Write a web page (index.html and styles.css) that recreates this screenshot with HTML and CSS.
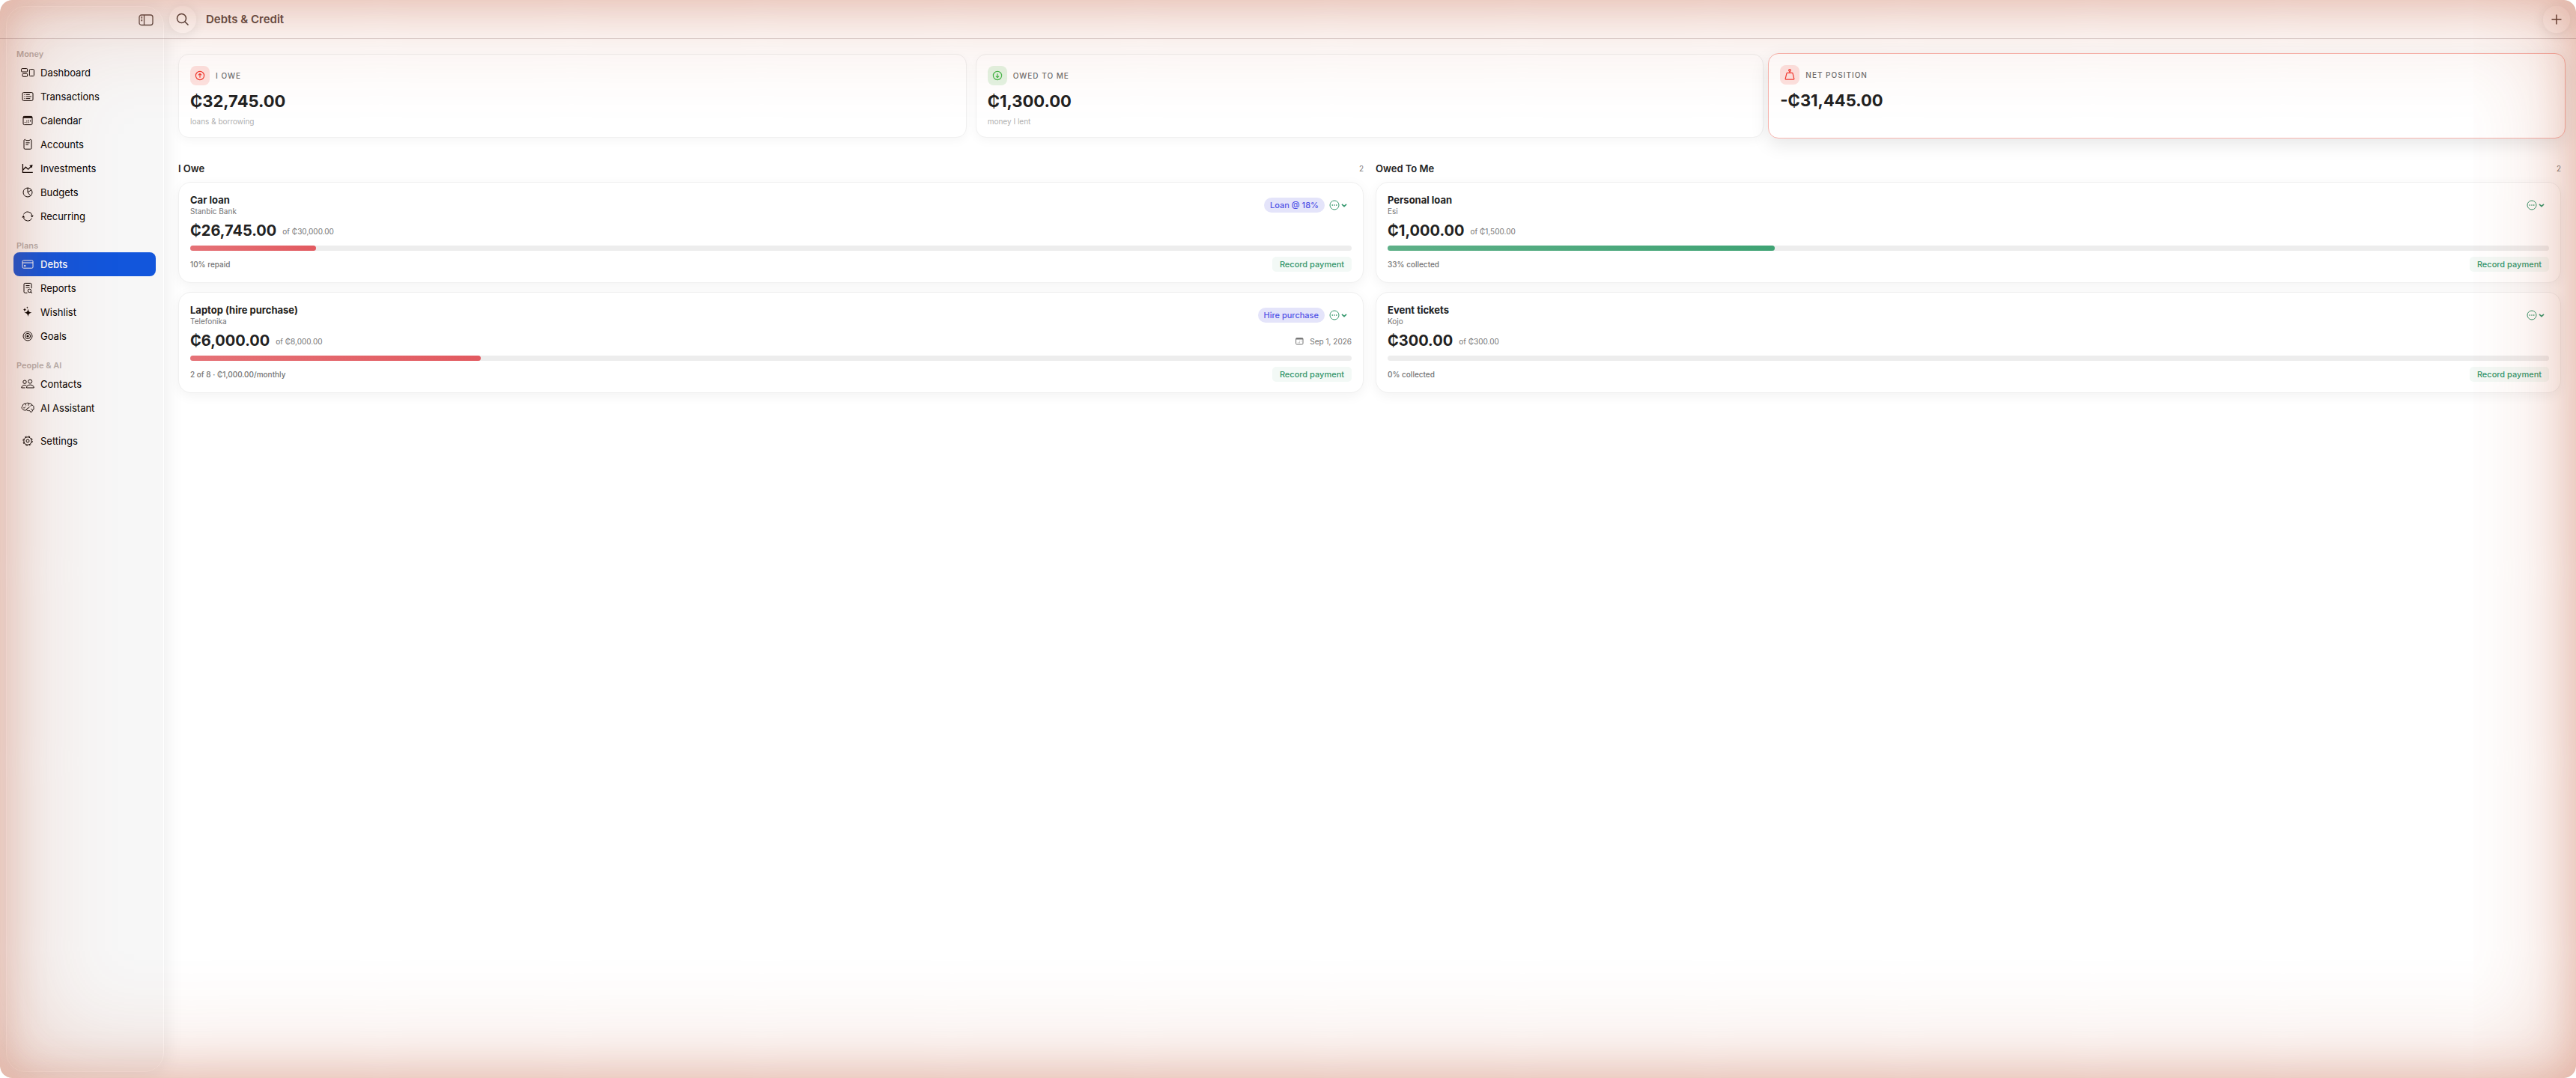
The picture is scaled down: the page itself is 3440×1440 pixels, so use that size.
FILE: index.html
```html
<!DOCTYPE html>
<html lang="en">
<head>
  <meta charset="UTF-8">
  <meta name="viewport" content="width=device-width, initial-scale=1.0">
  <title>Debts &amp; Credit</title>
  <link rel="stylesheet" href="styles.css">
</head>
<body>
  <div class="window">
    <aside class="sidebar">
      <div class="sidebar-top">
        <button class="icon-button" aria-label="Toggle sidebar">
          <svg width="20" height="16" viewBox="0 0 20 16"><rect x="1" y="1" width="18" height="13.5" rx="3"/><path d="M7.5 1v13.5M3.2 4h2M3.2 6.3h2M3.2 8.6h2"/></svg>
        </button>
      </div>
      <nav>
        <h2>Money</h2>
        <a href="#"><svg viewBox="0 0 18 16"><rect x=".6" y="2.6" width="8" height="4.4" rx="1"/><rect x="2" y="9.3" width="6.6" height="4" rx="1"/><rect x="11.4" y="3.6" width="6" height="9" rx="1"/></svg>Dashboard</a>
        <a href="#"><svg viewBox="0 0 18 16"><rect x="2" y="2.6" width="14" height="10.8" rx="1.5"/><path d="M4.4 5.4h1M6.8 5.4h5M4.4 8h1M6.8 8h7M4.4 10.6h1M6.8 10.6h5.5"/></svg>Transactions</a>
        <a href="#"><svg viewBox="0 0 18 16"><rect x="3" y="2.4" width="12" height="11.2" rx="1.5"/><path d="M3 3.6h12" stroke-width="2.4"/><path d="M5.4 10v1.4M7.8 8v3.4M10.2 7v4.4M12.6 7v3" stroke-dasharray="1 .6"/></svg>Calendar</a>
        <a href="#"><svg viewBox="0 0 18 16"><path d="M4 2.2l1.4-.9L7 2.7h4l1.6-1.4 1.4.9v10.6a1.4 1.4 0 0 1-1.4 1.4H5.4A1.4 1.4 0 0 1 4 12.8z"/><path d="M6.4 5.8h5.2M6.4 8.2h3.6"/></svg>Accounts</a>
        <a href="#"><svg viewBox="0 0 18 16"><path d="M2.4 2v11.4h13.4M2.4 10.2l4-4 3.2 3 4-4" stroke-width="1.3"/><path class="solid" d="M11.2 4l4.4-1-1 4.4z"/></svg>Investments</a>
        <a href="#"><svg viewBox="0 0 18 16"><circle cx="9" cy="8" r="6"/><path d="M9 2v6l3.8 4.6M9 8l5-3.4"/></svg>Budgets</a>
        <a href="#"><svg viewBox="0 0 18 16"><path d="M3.6 5.4a6 6 0 0 1 11.200 1M14.400 10.600a6 6 0 0 1-11.200-1"/><path class="solid" d="M1.200 9.400h4L3.200 6.600zM12.800 6.800h4l-2 2.800z"/></svg>Recurring</a>

        <h2>Plans</h2>
        <a href="#" class="active" aria-current="page"><svg viewBox="0 0 18 16"><rect x="2" y="2.8" width="14" height="10.4" rx="1.4"/><path d="M2 6h14M4.4 9.600h1.600v1H4.400z"/></svg>Debts</a>
        <a href="#"><svg viewBox="0 0 18 16"><path d="M8.500 14.200H5.400A1.400 1.400 0 0 1 4 12.800V2.800a1.400 1.400 0 0 1 1.400-1.400h7.200A1.400 1.400 0 0 1 14 2.800v5.400M6.500 4.500h5M6.500 7h5"/><circle cx="11.400" cy="11.400" r="2.200"/><path d="M13 13l2 1.600"/></svg>Reports</a>
        <a href="#"><svg viewBox="0 0 18 16"><path class="solid" d="M9.500 3.600c.7 3.500 1.400 4.500 5.100 5.200-3.700.7-4.400 1.700-5.100 5.300-.7-3.600-1.400-4.600-5.100-5.300 3.700-.7 4.400-1.700 5.100-5.200zM5 2.200c.4 1.700.8 2.200 2.300 2.500C5.800 5 5.400 5.500 5 7.200 4.600 5.500 4.200 5 2.700 4.700 4.200 4.400 4.600 3.900 5 2.200zM8.400.2c.2 1.100.5 1.400 1.500 1.600-1 .2-1.300.5-1.500 1.600-.2-1.100-.5-1.400-1.500-1.600 1-.2 1.300-.5 1.500-1.600z"/></svg>Wishlist</a>
        <a href="#"><svg viewBox="0 0 18 16"><circle cx="9" cy="8" r="6"/><circle cx="9" cy="8" r="3.600"/><circle class="solid" cx="9" cy="8" r="1.600"/></svg>Goals</a>

        <h2>People &amp; AI</h2>
        <a href="#"><svg viewBox="0 0 18 16"><circle cx="5" cy="5.200" r="2.200"/><circle cx="12.200" cy="4.600" r="2.500"/><path d="M7.400 10.100C4.600 8.500 1 9.800.7 13h5M7.400 13c0-5.200 9.800-5.200 9.900 0z"/></svg>Contacts</a>
        <a href="#"><svg viewBox="0 0 18 16"><path d="M2.200 9.500C.6 8.600.8 6 2.300 5.300 2.200 3 4.500 1.800 6.300 2.300 7.600.9 10 1.100 11 2.200c1.700-.3 3.300.4 3.800 1.800 1.700.5 2.600 2.100 2.200 3.700.4 1.500-.2 3-1.600 3.400-.1 1.300-1 2.400-2.300 2.600l-1.500-2.200c-1.500.3-3 .1-3.900-.9-1.700.7-4.700.5-5.500-1.100zM3.200 7.800c1.300.5 2.300-.2 2.600-1.300M6.300 2.300c-.4 1 0 1.900.8 2.300M7.700 10.600c-.2-1.500.7-2.500 2-2.600M11 2.200c-1.200.6-1.500 1.600-1.100 2.600M9.700 8c1 0 1.500-.8 1.500-1.700M14.800 4c-1.200.1-1.900.8-2 1.800M15.400 11.100c-.2-1-.9-1.700-1.900-1.800"/></svg>AI Assistant</a>
        <a href="#" class="settings"><svg viewBox="0 0 18 16"><circle cx="9" cy="8" r="5.200"/><circle cx="9" cy="8" r="6.200" stroke-dasharray="2.500 2.370"/><circle cx="9" cy="8" r="2"/></svg>Settings</a>
      </nav>
    </aside>

    <main class="main">
      <header class="topbar">
        <button class="round-button" aria-label="Search">
          <svg width="18" height="18" viewBox="0 0 18 18"><circle cx="7.500" cy="7.500" r="6"/><path d="M12 12l4.500 4.500"/></svg>
        </button>
        <h1>Debts &amp; Credit</h1>
        <button class="round-button add" aria-label="Add debt">
          <svg width="14" height="14" viewBox="0 0 14 14"><path d="M7 .5v13M.5 7h13"/></svg>
        </button>
      </header>

      <section class="stats">
        <div class="stat">
          <div class="stat-head">
            <span class="badge red"><svg width="14" height="14" viewBox="0 0 14 14"><circle cx="7" cy="7" r="5.600"/><path d="M7 9.800V4.600M4.900 6.400L7 4.300l2.100 2.100"/></svg></span>
            <h3>I OWE</h3>
          </div>
          <p class="value">₵32,745.00</p>
          <p class="hint">loans &amp; borrowing</p>
        </div>
        <div class="stat">
          <div class="stat-head">
            <span class="badge green"><svg width="14" height="14" viewBox="0 0 14 14"><circle cx="7" cy="7" r="5.600"/><path d="M7 4.200v5.200M4.900 7.600L7 9.700l2.100-2.100"/></svg></span>
            <h3>OWED TO ME</h3>
          </div>
          <p class="value">₵1,300.00</p>
          <p class="hint">money I lent</p>
        </div>
        <div class="stat highlight">
          <div class="stat-head">
            <span class="badge red"><svg width="14" height="16" viewBox="0 0 14 16"><circle cx="7" cy="2" r="1.300"/><path d="M7 3.300v2M3.800 5.400h6.400q.7 0 .9.700l1.700 7q.2 1-.8 1H2q-1 0-.8-1l1.700-7q.2-.7.900-.7z"/></svg></span>
            <h3>NET POSITION</h3>
          </div>
          <p class="value">-₵31,445.00</p>
        </div>
      </section>

      <div class="columns">
        <section class="column">
          <div class="column-head"><h2>I Owe</h2><span>2</span></div>

          <article class="debt">
            <div class="debt-head">
              <div>
                <h3>Car loan</h3>
                <p>Stanbic Bank</p>
              </div>
              <span class="pill">Loan @ 18%</span>
              <button class="more" aria-label="More actions"><svg width="26" height="14" viewBox="0 0 26 14"><circle cx="7" cy="7" r="6"/><path d="M3.600 7h1.400M6.300 7h1.400M9 7h1.400" stroke-width="1.400"/><path d="M17 5.800l3 2.800 3-2.800" stroke-width="1.600"/></svg></button>
            </div>
            <div class="amount"><strong>₵26,745.00</strong><span>of ₵30,000.00</span></div>
            <div class="bar"><div class="fill owe" style="width: 10.85%"></div></div>
            <div class="debt-foot"><span>10% repaid</span><button class="record">Record payment</button></div>
          </article>

          <article class="debt">
            <div class="debt-head">
              <div>
                <h3>Laptop (hire purchase)</h3>
                <p>Telefonika</p>
              </div>
              <span class="pill">Hire purchase</span>
              <button class="more" aria-label="More actions"><svg width="26" height="14" viewBox="0 0 26 14"><circle cx="7" cy="7" r="6"/><path d="M3.600 7h1.400M6.300 7h1.400M9 7h1.400" stroke-width="1.400"/><path d="M17 5.800l3 2.800 3-2.800" stroke-width="1.600"/></svg></button>
            </div>
            <div class="amount"><strong>₵6,000.00</strong><span>of ₵8,000.00</span>
              <time datetime="2026-09-01"><svg width="11" height="10" viewBox="0 0 11 10"><rect x=".6" y=".6" width="9.400" height="8.400" rx="1.200"/><path d="M.6 1.600h9.400" stroke-width="1.800"/><path d="M3 6.800h1M5 6.800h1M5 4.800h1M7 4.800h1" opacity=".6"/></svg>Sep 1, 2026</time>
            </div>
            <div class="bar"><div class="fill owe" style="width: 25%"></div></div>
            <div class="debt-foot"><span>2 of 8 · ₵1,000.00/monthly</span><button class="record">Record payment</button></div>
          </article>
        </section>

        <section class="column">
          <div class="column-head"><h2>Owed To Me</h2><span>2</span></div>

          <article class="debt">
            <div class="debt-head">
              <div>
                <h3>Personal loan</h3>
                <p>Esi</p>
              </div>
              <button class="more" aria-label="More actions"><svg width="26" height="14" viewBox="0 0 26 14"><circle cx="7" cy="7" r="6"/><path d="M3.600 7h1.400M6.300 7h1.400M9 7h1.400" stroke-width="1.400"/><path d="M17 5.800l3 2.800 3-2.800" stroke-width="1.600"/></svg></button>
            </div>
            <div class="amount"><strong>₵1,000.00</strong><span>of ₵1,500.00</span></div>
            <div class="bar"><div class="fill owed" style="width: 33.33%"></div></div>
            <div class="debt-foot"><span>33% collected</span><button class="record">Record payment</button></div>
          </article>

          <article class="debt">
            <div class="debt-head">
              <div>
                <h3>Event tickets</h3>
                <p>Kojo</p>
              </div>
              <button class="more" aria-label="More actions"><svg width="26" height="14" viewBox="0 0 26 14"><circle cx="7" cy="7" r="6"/><path d="M3.600 7h1.400M6.300 7h1.400M9 7h1.400" stroke-width="1.400"/><path d="M17 5.800l3 2.800 3-2.800" stroke-width="1.600"/></svg></button>
            </div>
            <div class="amount"><strong>₵300.00</strong><span>of ₵300.00</span></div>
            <div class="bar"><div class="fill owed" style="width: 0%"></div></div>
            <div class="debt-foot"><span>0% collected</span><button class="record">Record payment</button></div>
          </article>
        </section>
      </div>
    </main>
    <div class="glow"></div>
  </div>
</body>
</html>
```
FILE: styles.css
```css
* {
  box-sizing: border-box;
}
body {
  margin: 0;
  background: #fff;
  font-family: Inter, "Noto Sans", sans-serif;
  font-size: 13px;
  color: #222;
}
h1, h2, h3, p {
  margin: 0;
}
button {
  font: inherit;
  border: none;
  background: none;
  padding: 0;
  cursor: pointer;
}
svg {
  display: block;
  fill: none;
  stroke: currentColor;
  stroke-width: 1;
}
svg .solid {
  fill: currentColor;
  stroke: none;
}

.window {
  position: relative;
  display: flex;
  min-height: 100vh;
  border-radius: 16px;
  overflow: hidden;
}
/* coloured light round the window edge, lies over everything */
.glow {
  position: absolute;
  inset: 0;
  border-radius: 16px;
  pointer-events: none;
  box-shadow:
    inset 0 0 60px rgba(184, 66, 28, 0.28),
    inset 0 0 150px rgba(184, 66, 28, 0.3);
}
/* hairline under the toolbar, runs across the sidebar too */
.window::after {
  content: "";
  position: absolute;
  top: 51px;
  left: 0;
  right: 0;
  height: 1px;
  background: rgba(70, 30, 30, 0.18);
}

/* sidebar */
.sidebar {
  width: 211px;
  flex-shrink: 0;
  margin: 8px 0 8px 8px;
  padding: 0 10px;
  background: #f7f7f7;
  border: 1px solid #fff;
  border-radius: 26px;
  box-shadow: 0 0 28px rgba(0, 0, 0, 0.09);
}
.sidebar-top {
  display: flex;
  justify-content: flex-end;
  padding: 10px 3px 0 0;
  height: 41px;
}
.icon-button {
  height: 16px;
  color: #574a46;
}
.icon-button svg {
  stroke-width: 1.3;
}
.sidebar h2 {
  margin: 15px 0 1px;
  padding-left: 3px;
  font-size: 11px;
  line-height: 16px;
  font-weight: 600;
  color: #b5b0ae;
}
.sidebar nav h2:first-child {
  margin-top: 14px;
}
.sidebar a {
  display: flex;
  align-items: center;
  gap: 8px;
  height: 32px;
  margin-left: -1px;
  padding-left: 10px;
  border-radius: 8px;
  color: #000;
  text-decoration: none;
}
.sidebar a svg {
  width: 18px;
  height: 16px;
}
.sidebar a.active {
  background: #1256dc;
  color: #fff;
  font-weight: 500;
}
.sidebar a.settings {
  margin-top: 12px;
}

/* toolbar */
.main {
  flex: 1;
  padding: 0 20px 20px 19px;
}
.topbar {
  display: flex;
  align-items: center;
  height: 51px;
  margin: 0 -12px;
}
.round-button {
  display: flex;
  align-items: center;
  justify-content: center;
  width: 36px;
  height: 36px;
  border: 1px solid rgba(255, 255, 255, 0.8);
  border-radius: 50%;
  background: rgba(255, 255, 255, 0.15);
  box-shadow: 0 2px 16px rgba(0, 0, 0, 0.1);
  color: #4a3d39;
}
.round-button svg {
  stroke-width: 1.5;
}
.topbar h1 {
  margin-left: 13px;
  font-size: 15px;
  font-weight: 600;
  color: #5a4e4a;
}
.topbar .add {
  margin-left: auto;
}

/* totals */
.stats {
  display: grid;
  grid-template-columns: repeat(3, 1fr);
  gap: 12px;
  margin-top: 21px;
}
.stat {
  height: 112px;
  padding: 15px;
  background: #fff;
  border: 1px solid #f0f0f0;
  border-radius: 14px;
  box-shadow: 0 4px 14px rgba(0, 0, 0, 0.04);
}
.stat.highlight {
  height: 114px;
  margin: -1px -6px;
  border-color: #f8b4ae;
  box-shadow: 0 8px 24px rgba(0, 0, 0, 0.1);
}
.stat-head {
  display: flex;
  align-items: center;
  gap: 8px;
}
.stat-head h3 {
  font-size: 10px;
  font-weight: 500;
  letter-spacing: 1px;
  color: #6f6f6f;
}
.badge {
  display: flex;
  align-items: center;
  justify-content: center;
  width: 26px;
  height: 26px;
  border-radius: 8px;
}
.badge svg {
  stroke-width: 1.2;
}
.badge.red {
  background: #fde2e0;
  color: #f23b32;
}
.badge.green {
  background: #e3f3e2;
  color: #45b649;
}
.value {
  margin-top: 8px;
  font-size: 22px;
  line-height: 26px;
  font-weight: 700;
}
.hint {
  margin-top: 6px;
  font-size: 10px;
  line-height: 16px;
  color: #b0b0b0;
}

/* debts */
.columns {
  display: grid;
  grid-template-columns: 1fr 1fr;
  gap: 16px;
  margin-top: 31px;
}
.column {
  display: flex;
  flex-direction: column;
  gap: 12px;
}
.column-head {
  display: flex;
  align-items: center;
  justify-content: space-between;
  height: 20px;
  margin-bottom: -4px;
}
.column-head h2 {
  font-size: 13px;
  font-weight: 600;
}
.column-head span {
  font-size: 10px;
  color: #808080;
}
.debt {
  padding: 15px 15px 14px;
  background: #fff;
  border: 1px solid #f0f0f0;
  border-radius: 17px;
  box-shadow: 0 4px 16px rgba(0, 0, 0, 0.05);
}
.debt-head {
  display: flex;
  align-items: center;
}
.debt-head > div {
  margin-right: auto;
}
.debt-head h3 {
  font-size: 13px;
  line-height: 16px;
  font-weight: 700;
}
.debt-head p {
  font-size: 10px;
  line-height: 14px;
  color: #757575;
}
.pill {
  padding: 0 8px;
  font-size: 11px;
  line-height: 20px;
  font-weight: 500;
  color: #5052e6;
  background: #e4e4fa;
  border-radius: 10px;
}
.more {
  height: 14px;
  margin: 0 4px 0 6px;
  color: #33966c;
}
.amount {
  display: flex;
  align-items: center;
  gap: 8px;
  margin-top: 7px;
  font-size: 10px;
  color: #757575;
}
.amount strong {
  font-size: 20px;
  line-height: 25px;
  color: #222;
}
.amount time {
  display: flex;
  align-items: center;
  gap: 8px;
  margin-left: auto;
}
.bar {
  height: 7px;
  margin-top: 7px;
  background: #ededed;
  border-radius: 4px;
}
.fill {
  height: 7px;
  border-radius: 4px;
}
.fill.owe {
  background: linear-gradient(90deg, #e57277, #e25a60);
}
.fill.owed {
  background: linear-gradient(90deg, #5eb088, #3fa374);
}
.debt-foot {
  display: flex;
  align-items: center;
  justify-content: space-between;
  margin-top: 8px;
  font-size: 10px;
  font-weight: 500;
  color: #757575;
}
.record {
  height: 20px;
  padding: 0 10px;
  font-size: 11px;
  font-weight: 500;
  color: #33966c;
  background: #f3f9f6;
  border-radius: 5px;
}
```
